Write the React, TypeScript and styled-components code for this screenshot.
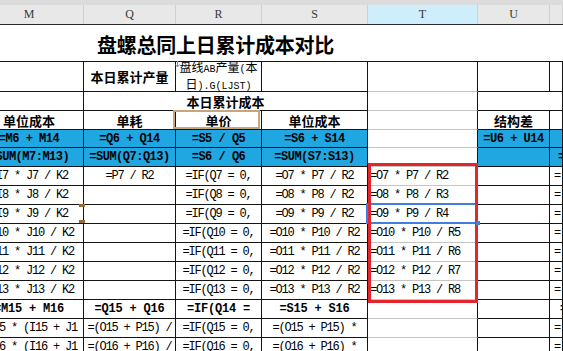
import React from "react";
import styled, { createGlobalStyle } from "styled-components";

const MONO = `"Liberation Mono", "DejaVu Sans Mono", monospace`;
const CJK = `"Noto Sans CJK SC", "Noto Sans", sans-serif`;
const BLUE = "#20a7e1";
const LINE = "#141414";
const SOFT = "#c4c4c4";
const COLS = "84px 92px 86px 106px 110px 72px 1fr";

const Global = createGlobalStyle`
  html, body { margin: 0; padding: 0; background: #fff; }
  body { width: 563px; height: 351px; overflow: hidden; }
`;

const Page = styled.div`
  position: relative;
  width: 563px;
  height: 351px;
  overflow: hidden;
  background: #fff;
`;

const Strip = styled.div`
  height: 5px;
  background: #dcdcdc;
`;

const HeaderRow = styled.div`
  display: grid;
  grid-template-columns: ${COLS};
  height: 20px;
  box-sizing: border-box;
  border-bottom: 1px solid #2a2a2a;
  background: #e8e8e8;
`;

const ColHead = styled.div<{ $active?: boolean; $shift?: number }>`
  display: flex;
  align-items: center;
  justify-content: center;
  padding-right: ${(p) => p.$shift ?? 0}px;
  border-right: 1px solid #d0d0d0;
  background: ${(p) => (p.$active ? "#cdeefa" : "transparent")};
  font-family: "Liberation Serif", serif;
  font-size: 12px;
  color: #3a3a3a;
`;

const Sheet = styled.div`
  display: grid;
  grid-template-columns: ${COLS};
  grid-template-rows: 37px 30px 19px 19px 18px 19px repeat(10, 19px);
`;

const TitleCell = styled.div`
  grid-column: 1 / -1;
  display: flex;
  align-items: center;
  padding: 2px 0 0 97px;
  box-sizing: border-box;
  border-bottom: 1px solid ${LINE};
  font-family: ${CJK};
  font-weight: 700;
  font-size: 20px;
  letter-spacing: -0.25px;
  color: #000;
  white-space: nowrap;
`;

type Weight = "normal" | "semi" | "bold";

const Cell = styled.div<{
  $span?: number;
  $fill?: boolean;
  $soft?: boolean;
  $left?: number;
  $shift?: number;
  $weight?: Weight;
  $cjk?: boolean;
}>`
  grid-column: span ${(p) => p.$span ?? 1};
  box-sizing: border-box;
  min-width: 0;
  overflow: hidden;
  white-space: nowrap;
  display: flex;
  align-items: center;
  justify-content: ${(p) => (p.$left !== undefined ? "flex-start" : "center")};
  padding: 0 ${(p) => p.$shift ?? 0}px 0 ${(p) => p.$left ?? 0}px;
  border-right: 1px solid ${LINE};
  border-bottom: 1px solid ${(p) => (p.$soft ? SOFT : LINE)};
  background: ${(p) => (p.$fill ? BLUE : "#fff")};
  color: #000;
  font-family: ${(p) => (p.$cjk ? CJK : MONO)};
  font-size: ${(p) => (p.$cjk ? 13 : 12)}px;
  font-weight: ${(p) => (p.$cjk || (p.$weight && p.$weight !== "normal") ? 700 : 400)};
  letter-spacing: ${(p) =>
    p.$cjk ? "0px" : p.$weight === "bold" ? "-0.2px" : p.$weight === "semi" ? "-0.5px" : "-1.2px"};
`;

const Note = styled.div`
  display: flex;
  flex-direction: column;
  align-items: center;
  font-family: ${CJK};
  font-size: 12px;
  line-height: 14px;
  font-weight: 400;
  letter-spacing: 0;
  white-space: nowrap;
`;

const Half = styled.span`
  font-family: ${MONO};
  font-size: 10px;
`;

const SelectBox = styled.div<{ $x: number; $y: number; $w: number; $h: number; $b: number; $c: string }>`
  position: absolute;
  left: ${(p) => p.$x}px;
  top: ${(p) => p.$y}px;
  width: ${(p) => p.$w}px;
  height: ${(p) => p.$h}px;
  box-sizing: border-box;
  border: ${(p) => p.$b}px solid ${(p) => p.$c};
  pointer-events: none;
`;

const Dot = styled.div<{ $x: number; $y: number; $w: number; $h: number; $c: string }>`
  position: absolute;
  left: ${(p) => p.$x}px;
  top: ${(p) => p.$y}px;
  width: ${(p) => p.$w}px;
  height: ${(p) => p.$h}px;
  background: ${(p) => p.$c};
`;

const NoteMark = styled.svg`
  position: absolute;
  left: 175px;
  top: 61px;
`;

const bodyRows = [7, 8, 9, 10, 11, 12, 13];

export default function App() {
  return (
    <>
      <Global />
      <Page>
        <Strip />
        <HeaderRow>
          <ColHead $shift={25}>M</ColHead>
          <ColHead>Q</ColHead>
          <ColHead>R</ColHead>
          <ColHead>S</ColHead>
          <ColHead $active>T</ColHead>
          <ColHead>U</ColHead>
          <ColHead />
        </HeaderRow>
        <Sheet>
          <TitleCell>盘螺总同上日累计成本对比</TitleCell>

          <Cell $shift={25} />
          <Cell $cjk>本日累计产量</Cell>
          <Cell>
            <Note>
              <span>
                盘线<Half>AB</Half>产量<Half>(</Half>本
              </span>
              <span>
                日<Half>).G(LJST)</Half>
              </span>
            </Note>
          </Cell>
          <Cell />
          <Cell $soft />
          <Cell />
          <Cell />

          <Cell $shift={25} />
          <Cell $span={3} $cjk>本日累计成本</Cell>
          <Cell $soft />
          <Cell $span={2} />

          <Cell $shift={25} $cjk>单位成本</Cell>
          <Cell $cjk>单耗</Cell>
          <Cell $cjk>单价</Cell>
          <Cell $cjk>单位成本</Cell>
          <Cell $soft />
          <Cell $cjk>结构差</Cell>
          <Cell />

          <Cell $shift={25} $fill $weight="semi">=M6 + M14</Cell>
          <Cell $fill $weight="semi">=Q6 + Q14</Cell>
          <Cell $fill $weight="semi">=S5 / Q5</Cell>
          <Cell $fill $weight="semi">=S6 + S14</Cell>
          <Cell $soft />
          <Cell $fill $weight="semi">=U6 + U14</Cell>
          <Cell $fill />

          <Cell $shift={25} $fill $weight="semi">=SUM(M7:M13)</Cell>
          <Cell $fill $weight="semi">=SUM(Q7:Q13)</Cell>
          <Cell $fill $weight="semi">=S6 / Q6</Cell>
          <Cell $fill $weight="semi">=SUM(S7:S13)</Cell>
          <Cell $soft />
          <Cell $fill />
          <Cell $fill $left={8} $weight="semi">=</Cell>

          {bodyRows.map((n) => (
            <React.Fragment key={n}>
              <Cell $shift={25}>{`=I${n} * J${n} / K2`}</Cell>
              <Cell>{n === 7 ? "=P7 / R2" : ""}</Cell>
              <Cell>{`=IF(Q${n} = 0,`}</Cell>
              <Cell>{`=O${n} * P${n} / R2`}</Cell>
              <Cell $soft $left={2}>{`=O${n} * P${n} / R${n - 5}`}</Cell>
              <Cell />
              <Cell $left={4}>=</Cell>
            </React.Fragment>
          ))}

          <Cell $shift={25} $weight="bold">=M15 + M16</Cell>
          <Cell $weight="bold">=Q15 + Q16</Cell>
          <Cell $weight="bold">=IF(Q14 =</Cell>
          <Cell $weight="bold">=S15 + S16</Cell>
          <Cell $soft />
          <Cell />
          <Cell $left={10} $weight="bold">=</Cell>

          {[15, 16].map((n) => (
            <React.Fragment key={n}>
              <Cell $shift={25}>{`=I${n} * (I${n} + J1`}</Cell>
              <Cell>{`=(O${n} + P${n}) /`}</Cell>
              <Cell>{`=IF(Q${n} = 0,`}</Cell>
              <Cell>{`=(O${n} + P${n}) *`}</Cell>
              <Cell $soft />
              <Cell />
              <Cell $left={4}>=</Cell>
            </React.Fragment>
          ))}
        </Sheet>

        <NoteMark width="5" height="7" viewBox="0 0 5 7">
          <path d="M2.5 0 V5 M0.5 3.5 L2.5 6 L4.5 3.5" stroke="#8a8a8a" strokeWidth="1" fill="none" />
        </NoteMark>
        <SelectBox $x={173} $y={110} $w={87} $h={19} $b={2} $c="#c9a47c" />
        <Dot $x={79} $y={204} $w={6} $h={3} $c="#9a6a35" />
        <Dot $x={79} $y={220} $w={6} $h={3} $c="#9a6a35" />
        <SelectBox $x={366} $y={203} $w={112} $h={21} $b={2} $c="#3f7fe0" />
        <SelectBox $x={368} $y={163} $w={110} $h={140} $b={3} $c="#e5242b" />
        <Dot $x={476} $y={221} $w={4} $h={4} $c="#3f7fe0" />
      </Page>
    </>
  );
}
